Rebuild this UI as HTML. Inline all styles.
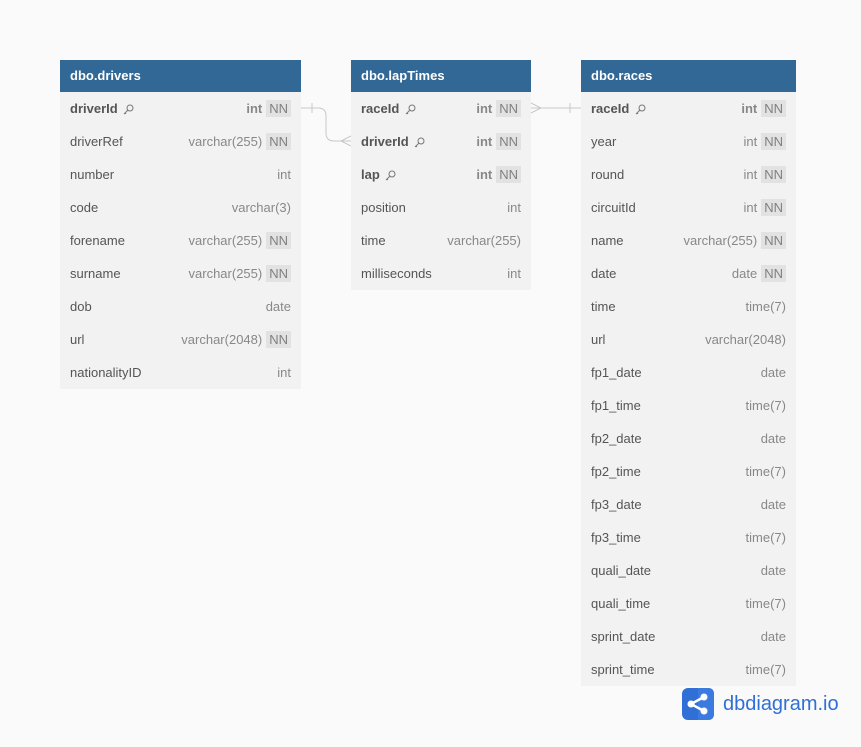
<!DOCTYPE html>
<html><head><meta charset="utf-8"><style>
body{margin:0;width:861px;height:747px;background:#fafafa;font-family:"Liberation Sans",sans-serif;position:relative;overflow:hidden}
.t{position:absolute;top:60px;background:#f2f2f2}
.h{height:32px;background:#316896;color:#fff;font-weight:bold;font-size:13px;line-height:32px;padding-left:10px}
.r{height:33px;display:flex;align-items:center;padding:0 10px;font-size:13px;color:#555}
.r .n{flex:1}
.r .ty{color:#888}
.r .nn{background:#e2e2e2;color:#808080;padding:1px 3px;margin-left:4px;line-height:15px;font-weight:normal}
.b{font-weight:bold}
.b .ty{font-weight:bold;color:#888}
.k{display:inline-block;margin-left:2px;vertical-align:middle}
</style></head><body>
<svg width="861" height="747" style="position:absolute;left:0;top:0">
<g stroke="#c8c8c8" fill="none" stroke-width="1">
<path d="M301 108 H318 Q326 108 326 116 V133 Q326 141 334 141 H351"/>
<path d="M312 103 V113"/>
<path d="M351 136 L341 141 L351 146"/>
<path d="M531 108 H581"/>
<path d="M570 103 V113"/>
<path d="M531 103 L541 108 L531 113"/>
</g>
</svg>
<div class="t" style="left:60px;width:241px">
<div class="h">dbo.drivers</div>
<div class="r b"><span class="n">driverId <svg class="k" width="11" height="11" viewBox="0 0 11 11"><circle cx="7" cy="4" r="3" fill="none" stroke="#777"/><path d="M5 6 L1 10 M2 9 L3 10" stroke="#777" fill="none"/></svg></span><span class="ty">int</span><span class="nn">NN</span></div>
<div class="r"><span class="n">driverRef</span><span class="ty">varchar(255)</span><span class="nn">NN</span></div>
<div class="r"><span class="n">number</span><span class="ty">int</span></div>
<div class="r"><span class="n">code</span><span class="ty">varchar(3)</span></div>
<div class="r"><span class="n">forename</span><span class="ty">varchar(255)</span><span class="nn">NN</span></div>
<div class="r"><span class="n">surname</span><span class="ty">varchar(255)</span><span class="nn">NN</span></div>
<div class="r"><span class="n">dob</span><span class="ty">date</span></div>
<div class="r"><span class="n">url</span><span class="ty">varchar(2048)</span><span class="nn">NN</span></div>
<div class="r"><span class="n">nationalityID</span><span class="ty">int</span></div>
</div>
<div class="t" style="left:351px;width:180px">
<div class="h">dbo.lapTimes</div>
<div class="r b"><span class="n">raceId <svg class="k" width="11" height="11" viewBox="0 0 11 11"><circle cx="7" cy="4" r="3" fill="none" stroke="#777"/><path d="M5 6 L1 10 M2 9 L3 10" stroke="#777" fill="none"/></svg></span><span class="ty">int</span><span class="nn">NN</span></div>
<div class="r b"><span class="n">driverId <svg class="k" width="11" height="11" viewBox="0 0 11 11"><circle cx="7" cy="4" r="3" fill="none" stroke="#777"/><path d="M5 6 L1 10 M2 9 L3 10" stroke="#777" fill="none"/></svg></span><span class="ty">int</span><span class="nn">NN</span></div>
<div class="r b"><span class="n">lap <svg class="k" width="11" height="11" viewBox="0 0 11 11"><circle cx="7" cy="4" r="3" fill="none" stroke="#777"/><path d="M5 6 L1 10 M2 9 L3 10" stroke="#777" fill="none"/></svg></span><span class="ty">int</span><span class="nn">NN</span></div>
<div class="r"><span class="n">position</span><span class="ty">int</span></div>
<div class="r"><span class="n">time</span><span class="ty">varchar(255)</span></div>
<div class="r"><span class="n">milliseconds</span><span class="ty">int</span></div>
</div>
<div class="t" style="left:581px;width:215px">
<div class="h">dbo.races</div>
<div class="r b"><span class="n">raceId <svg class="k" width="11" height="11" viewBox="0 0 11 11"><circle cx="7" cy="4" r="3" fill="none" stroke="#777"/><path d="M5 6 L1 10 M2 9 L3 10" stroke="#777" fill="none"/></svg></span><span class="ty">int</span><span class="nn">NN</span></div>
<div class="r"><span class="n">year</span><span class="ty">int</span><span class="nn">NN</span></div>
<div class="r"><span class="n">round</span><span class="ty">int</span><span class="nn">NN</span></div>
<div class="r"><span class="n">circuitId</span><span class="ty">int</span><span class="nn">NN</span></div>
<div class="r"><span class="n">name</span><span class="ty">varchar(255)</span><span class="nn">NN</span></div>
<div class="r"><span class="n">date</span><span class="ty">date</span><span class="nn">NN</span></div>
<div class="r"><span class="n">time</span><span class="ty">time(7)</span></div>
<div class="r"><span class="n">url</span><span class="ty">varchar(2048)</span></div>
<div class="r"><span class="n">fp1_date</span><span class="ty">date</span></div>
<div class="r"><span class="n">fp1_time</span><span class="ty">time(7)</span></div>
<div class="r"><span class="n">fp2_date</span><span class="ty">date</span></div>
<div class="r"><span class="n">fp2_time</span><span class="ty">time(7)</span></div>
<div class="r"><span class="n">fp3_date</span><span class="ty">date</span></div>
<div class="r"><span class="n">fp3_time</span><span class="ty">time(7)</span></div>
<div class="r"><span class="n">quali_date</span><span class="ty">date</span></div>
<div class="r"><span class="n">quali_time</span><span class="ty">time(7)</span></div>
<div class="r"><span class="n">sprint_date</span><span class="ty">date</span></div>
<div class="r"><span class="n">sprint_time</span><span class="ty">time(7)</span></div>
</div>
<svg style="position:absolute;left:682px;top:688px" width="32" height="32" viewBox="0 0 32 32">
<rect width="32" height="32" rx="6" fill="#2f6fd6"/>
<path d="M16 0 H26 Q32 0 32 6 V26 Q32 32 26 32 H16Z" fill="#3b7be0"/>
<g stroke="#fff" stroke-width="2.5"><path d="M9 16 L22 9 M9 16 L22 23"/></g>
<circle cx="9" cy="16" r="3.5" fill="#fff"/><circle cx="22" cy="9" r="3.5" fill="#fff"/><circle cx="22" cy="23" r="3.5" fill="#fff"/>
</svg>
<div style="position:absolute;left:723px;top:690px;font-size:20px;color:#2f6fd6;line-height:28px">dbdiagram.io</div>
</body></html>
